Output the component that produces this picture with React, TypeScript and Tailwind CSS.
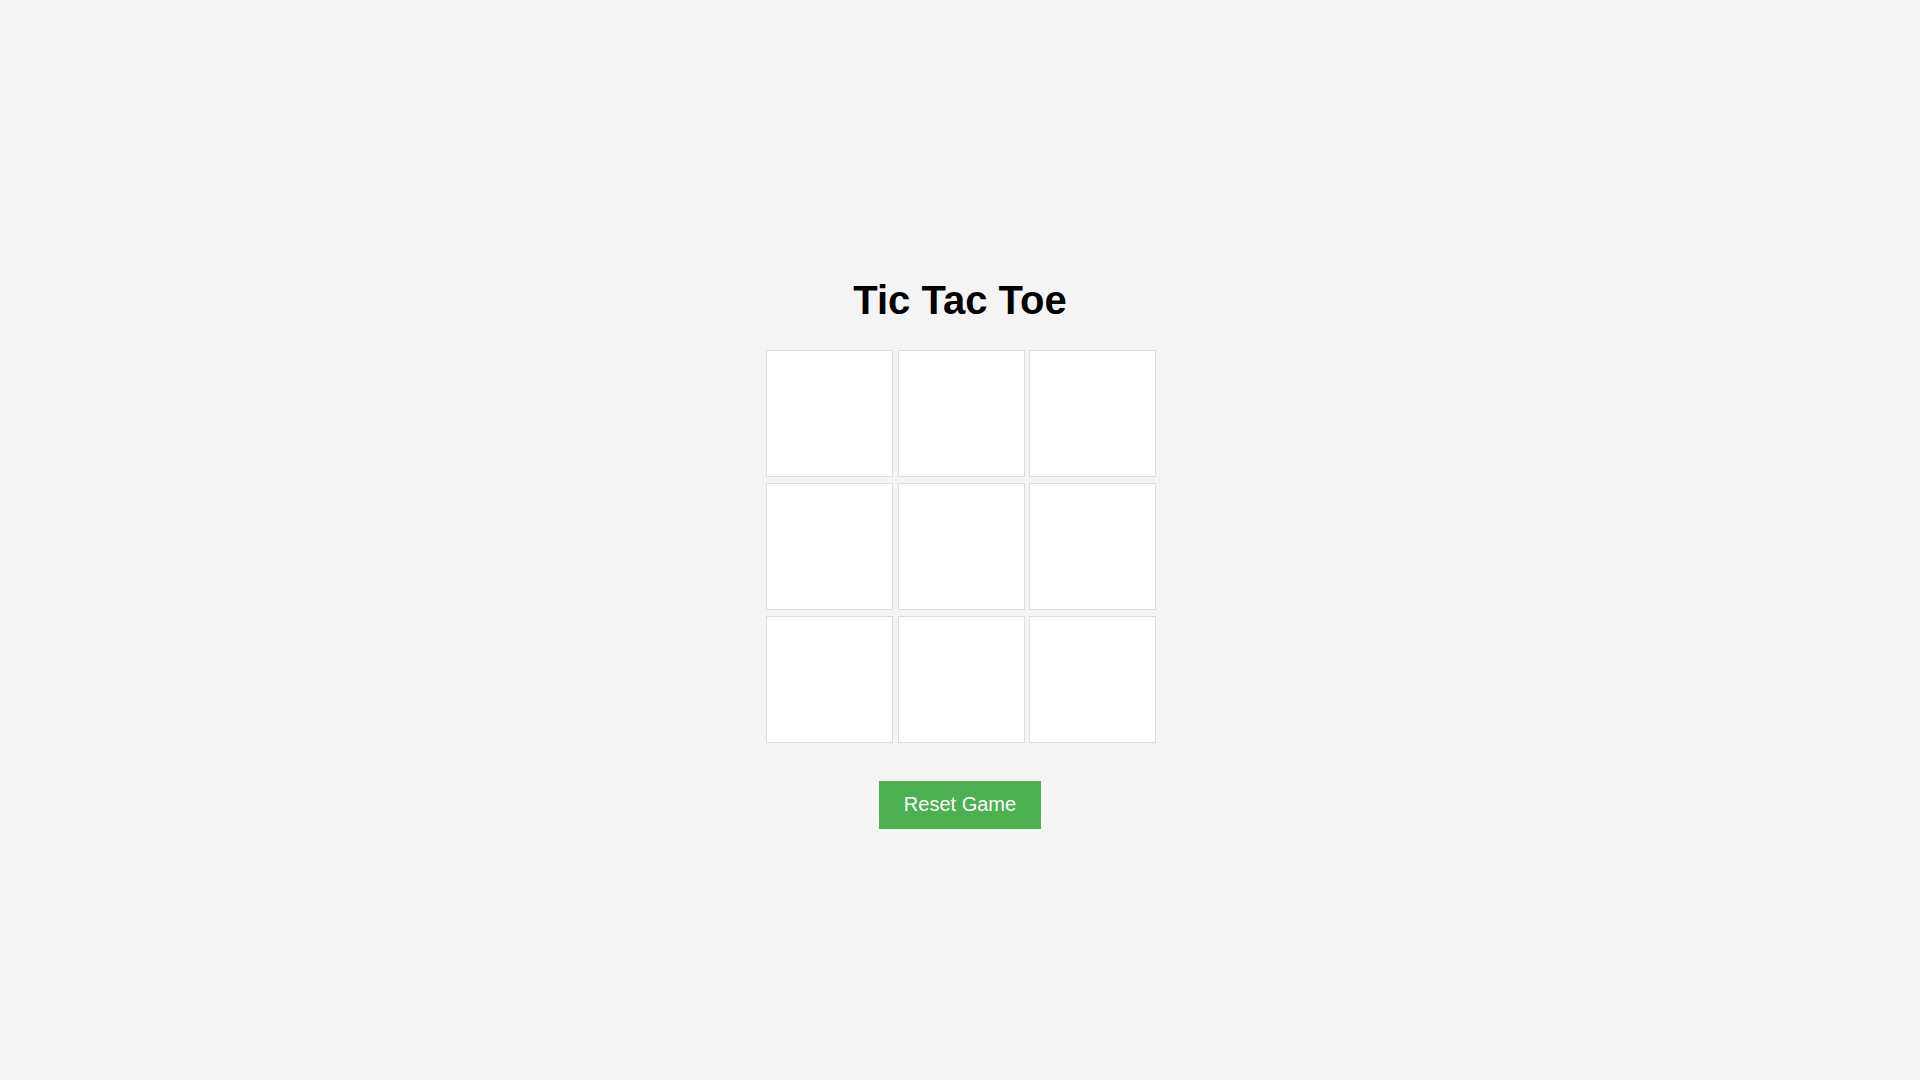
import { useState } from "react";

type Cell = "X" | "O" | null;

const LINES = [
  [0, 1, 2],
  [3, 4, 5],
  [6, 7, 8],
  [0, 3, 6],
  [1, 4, 7],
  [2, 5, 8],
  [0, 4, 8],
  [2, 4, 6],
];

function winnerOf(cells: Cell[]) {
  for (const [a, b, c] of LINES) {
    if (cells[a] && cells[a] === cells[b] && cells[a] === cells[c]) return cells[a];
  }
  return null;
}

export default function App() {
  const [cells, setCells] = useState<Cell[]>(Array(9).fill(null));
  const [xNext, setXNext] = useState(true);

  function play(i: number) {
    if (cells[i] || winnerOf(cells)) return;
    const next = cells.slice();
    next[i] = xNext ? "X" : "O";
    setCells(next);
    setXNext(!xNext);
  }

  function reset() {
    setCells(Array(9).fill(null));
    setXNext(true);
  }

  return (
    <div className="flex h-screen flex-col items-center justify-center bg-[#f4f4f4] font-['Liberation_Sans',Arial,sans-serif] text-black">
      <h1 className="mt-[26px] mb-[27px] text-[40px] font-bold leading-[46px]">Tic Tac Toe</h1>

      <div className="ml-[2px] grid grid-cols-[repeat(3,127px)] gap-x-[4.5px] gap-y-[6px]">
        {cells.map((c, i) => (
          <button
            key={i}
            onClick={() => play(i)}
            className="flex h-[127px] w-[127px] items-center justify-center border border-[#dddddd] bg-white text-5xl font-bold"
          >
            {c}
          </button>
        ))}
      </div>

      <button
        onClick={reset}
        className="mt-[38px] h-[48px] w-[162px] pb-[2px] bg-[#4caf50] text-[20px] leading-[24px] text-white hover:bg-[#45a049]"
      >
        Reset Game
      </button>
    </div>
  );
}
